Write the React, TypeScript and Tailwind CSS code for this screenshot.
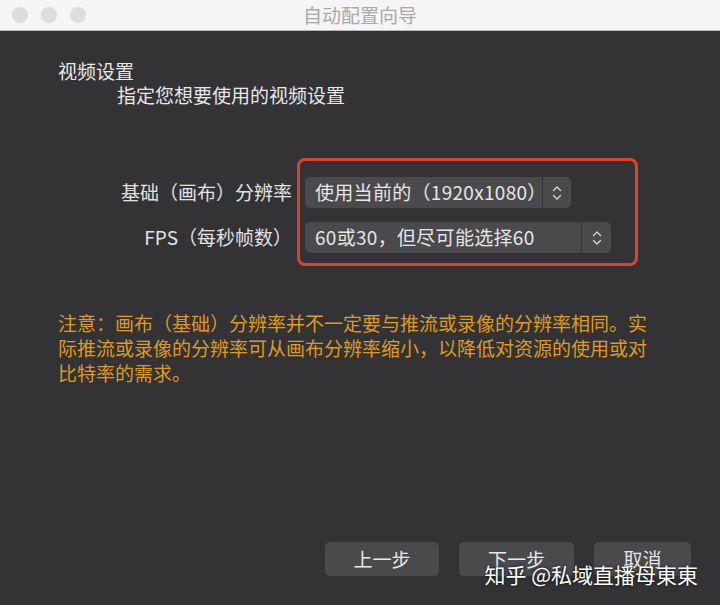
import React from "react";

const Stepper = () => (
  <svg width="10" height="18" viewBox="0 0 10 18" fill="none">
    <path d="M1.5 6.5 L5 3 L8.5 6.5" stroke="#d8d8d8" strokeWidth="1.3" strokeLinecap="round" strokeLinejoin="round" />
    <path d="M1.5 11.5 L5 15 L8.5 11.5" stroke="#d8d8d8" strokeWidth="1.3" strokeLinecap="round" strokeLinejoin="round" />
  </svg>
);

const Select = ({ text, width, arrowLeft }: { text: string; width: string; arrowLeft: string }) => (
  <div className={`flex h-[31px] ${width} rounded-[5px] bg-[#4a494c] text-[#e6e6e6]`}>
    <div className={`flex items-center pl-[10px] ${arrowLeft} border-r border-[#343335] whitespace-nowrap tracking-[0.3px]`}>{text}</div>
    <div className="flex flex-1 items-center justify-center">
      <Stepper />
    </div>
  </div>
);

const App = () => {
  return (
    <div
      className="relative flex h-[605px] w-[720px] flex-col overflow-hidden bg-[#333335] text-[19px]"
      style={{ fontFamily: '"Noto Sans CJK SC", "Noto Sans", sans-serif' }}
    >
      {/* title bar */}
      <div className="relative flex h-[31px] items-center border-b border-[#b8b8b8] bg-[#f5f5f5]">
        <div className="flex gap-[13px] pl-[12px]">
          <span className="h-[16px] w-[16px] rounded-full bg-[#dddddd]" />
          <span className="h-[16px] w-[16px] rounded-full bg-[#dddddd]" />
          <span className="h-[16px] w-[16px] rounded-full bg-[#dddddd]" />
        </div>
        <div className="absolute inset-0 flex items-center justify-center text-[19px] text-[#a8a8a8]">自动配置向导</div>
      </div>

      {/* header */}
      <div className="pl-[58px] pt-[28px] leading-[24px] text-[#e8e8e8]">
        <div>视频设置</div>
        <div className="pl-[59px]">指定您想要使用的视频设置</div>
      </div>

      {/* form */}
      <div className="mt-[70px] flex pl-[58px] text-[#e2e2e2]">
        <div className="flex w-[234px] flex-col gap-[14px] text-right">
          <div className="flex h-[31px] items-center justify-end whitespace-nowrap">基础（画布）分辨率</div>
          <div className="flex h-[31px] items-center justify-end whitespace-nowrap">FPS（每秒帧数）</div>
        </div>
        <div className="relative ml-[13px] flex flex-col gap-[14px]">
          <Select text="使用当前的（1920x1080）" width="w-[266px]" arrowLeft="w-[238px]" />
          <Select text="60或30，但尽可能选择60" width="w-[306px]" arrowLeft="w-[277px]" />
          <div className="absolute left-[-8px] top-[-19px] h-[108px] w-[341px] rounded-[8px] border-[3px] border-[#d9432f]" />
        </div>
      </div>

      {/* note */}
      <div className="mt-[57px] pl-[58px] leading-[25px] text-[#df9a1f]">
        <div className="whitespace-nowrap">注意：画布（基础）分辨率并不一定要与推流或录像的分辨率相同。实</div>
        <div className="whitespace-nowrap">际推流或录像的分辨率可从画布分辨率缩小，以降低对资源的使用或对</div>
        <div className="whitespace-nowrap">比特率的需求。</div>
      </div>

      {/* buttons */}
      <div className="mt-auto flex justify-end gap-[20px] pb-[29px] pr-[29px] text-[#e8e8e8]">
        <button className="h-[34px] w-[114px] rounded-[5px] bg-[#4a494c]">上一步</button>
        <button className="h-[34px] w-[115px] rounded-[5px] bg-[#4a494c]">下一步</button>
        <button className="h-[34px] w-[97px] rounded-[5px] bg-[#4a494c]">取消</button>
      </div>

      {/* watermark */}
      <div className="absolute bottom-[17px] right-[22px] whitespace-nowrap text-[21px] leading-[28px] text-white [text-shadow:0_0_3px_rgba(0,0,0,0.9)]">
        知乎 @私域直播母東東
      </div>
    </div>
  );
};

export default App;
